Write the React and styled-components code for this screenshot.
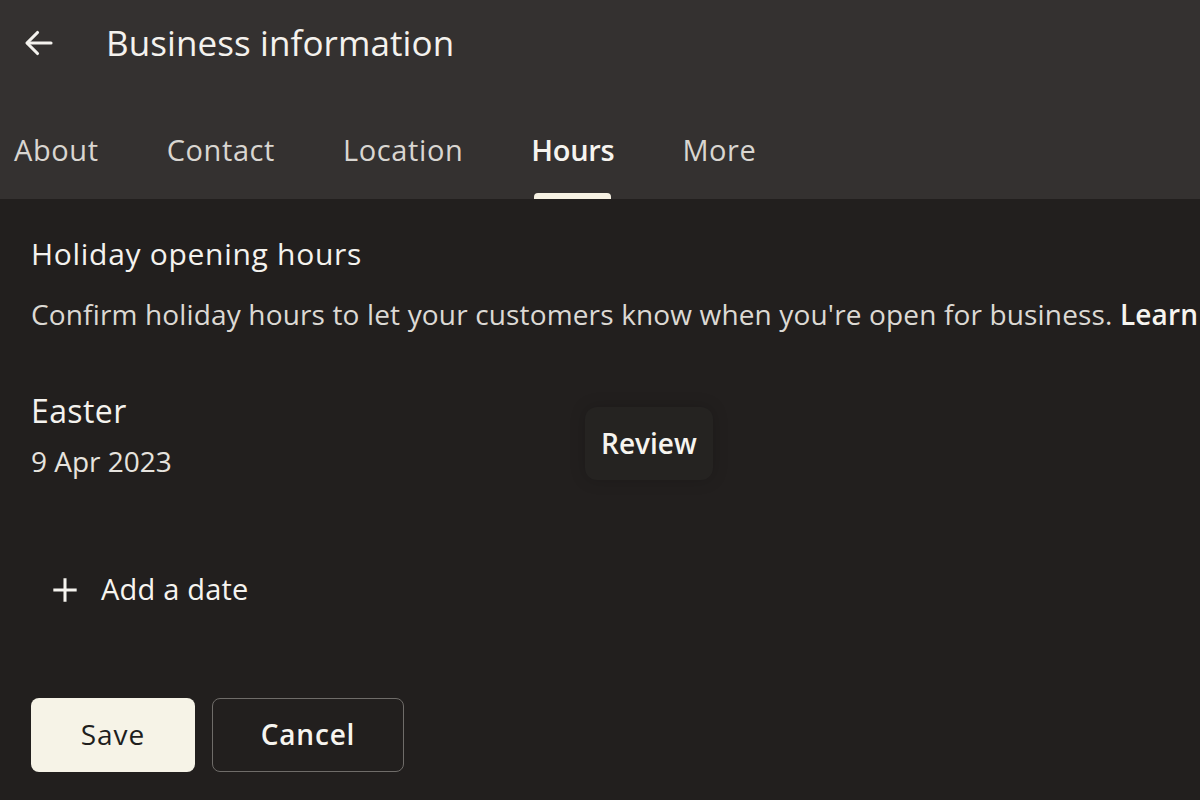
import React from "react";
import styled, { createGlobalStyle } from "styled-components";

const Global = createGlobalStyle`
  html, body { margin: 0; padding: 0; background: #221f1e; }
  body { font-family: "Open Sans", Roboto, sans-serif; color: #f1efea; overflow: hidden; line-height: 1.2; }
  * { box-sizing: border-box; }
  button { font-family: "Open Sans", Roboto, sans-serif; line-height: 1.2; cursor: pointer; }
`;

const Page = styled.div`
  width: 1200px;
  height: 800px;
  display: flex;
  flex-direction: column;
  background: #221f1e;
  overflow: hidden;
`;

const Header = styled.header`
  background: #343130;
  height: 199px;
  display: flex;
  flex-direction: column;
  flex-shrink: 0;
`;

const TopBar = styled.div`
  height: 86px;
  display: flex;
  align-items: center;
  padding-left: 20px;
  gap: 49px;
`;

const BackButton = styled.button`
  width: 37px;
  height: 37px;
  padding: 0;
  border: 0;
  background: none;
  color: #f4f2ee;
  display: flex;
  align-items: center;
  justify-content: center;
`;

const Title = styled.h1`
  margin: 0;
  font-size: 35px;
  font-weight: 400;
  color: #f4f2ee;
  letter-spacing: 0.1px;
`;

const Tabs = styled.nav`
  flex: 1;
  display: flex;
  align-items: stretch;
  padding-left: 14px;
  gap: 68px;
`;

const Tab = styled.div`
  position: relative;
  display: flex;
  align-items: center;
  padding-top: 16px;
  font-size: 29px;
  font-weight: ${(p) => (p.$active ? 600 : 400)};
  letter-spacing: ${(p) => (p.$active ? "-0.3px" : "0.6px")};
  color: ${(p) => (p.$active ? "#f6f4ef" : "#d9d6d1")};
`;

const Indicator = styled.span`
  position: absolute;
  left: 3px;
  right: 3px;
  bottom: 0;
  height: 6px;
  border-radius: 4px 4px 0 0;
  background: #f6f1e3;
`;

const Content = styled.main`
  flex: 1;
  display: flex;
  flex-direction: column;
  padding: 37px 0 0 31px;
`;

const SectionTitle = styled.h2`
  margin: 0;
  font-size: 30px;
  font-weight: 500;
  letter-spacing: 0.7px;
  color: #f4f2ee;
`;

const Description = styled.p`
  margin: 26px 0 0;
  font-size: 28px;
  font-weight: 400;
  letter-spacing: 0.15px;
  color: #dcd9d4;
  white-space: nowrap;
  b { font-weight: 600; color: #f6f4ef; }
`;

const HolidayRow = styled.div`
  margin-top: 60px;
  display: flex;
  align-items: flex-start;
`;

const HolidayInfo = styled.div`
  width: 554px;
  display: flex;
  flex-direction: column;
  gap: 15px;
`;

const HolidayName = styled.div`
  font-size: 32px;
  font-weight: 400;
  letter-spacing: 0.4px;
  color: #f4f2ee;
`;

const HolidayDate = styled.div`
  font-size: 28px;
  color: #e6e3de;
`;

const ReviewButton = styled.button`
  border: 0;
  background: #252321;
  border-radius: 12px;
  box-shadow: 0 0 16px rgba(0, 0, 0, 0.18);
  padding: 20px 16px;
  font-size: 28px;
  font-weight: 600;
  color: #f6f4ef;
  margin-top: 15px;
`;

const AddDate = styled.button`
  margin-top: 92px;
  margin-left: 20px;
  align-self: flex-start;
  border: 0;
  background: none;
  padding: 0;
  display: flex;
  align-items: center;
  gap: 22px;
  font-size: 29px;
  font-weight: 500;
  letter-spacing: 0.2px;
  color: #f6f4ef;
`;

const Actions = styled.div`
  margin-top: 91px;
  display: flex;
  gap: 17px;
`;

const ActionButton = styled.button`
  height: 74px;
  width: ${(p) => p.$w}px;
  border-radius: 8px;
  font-size: 28px;
  font-weight: ${(p) => (p.$primary ? 400 : 600)};
  letter-spacing: ${(p) => (p.$primary ? "1px" : "0.8px")};
  color: ${(p) => (p.$primary ? "#201e1d" : "#f6f4ef")};
  background: ${(p) => (p.$primary ? "#f6f3e7" : "transparent")};
  border: ${(p) => (p.$primary ? "0" : "1.5px solid #6f6c69")};
`;

const tabs = ["About", "Contact", "Location", "Hours", "More"];

export default function App() {
  return (
    <>
      <Global />
      <Page>
        <Header>
          <TopBar>
            <BackButton aria-label="Back">
              <svg width="36" height="36" viewBox="0 0 24 24" fill="none" stroke="currentColor" strokeWidth="2.1" strokeLinecap="round" strokeLinejoin="round">
                <path d="M20 12H4.5" />
                <path d="M11 5l-7 7 7 7" />
              </svg>
            </BackButton>
            <Title>Business information</Title>
          </TopBar>
          <Tabs>
            {tabs.map((t) => (
              <Tab key={t} $active={t === "Hours"}>
                {t}
                {t === "Hours" && <Indicator />}
              </Tab>
            ))}
          </Tabs>
        </Header>
        <Content>
          <SectionTitle>Holiday opening hours</SectionTitle>
          <Description>
            Confirm holiday hours to let your customers know when you're open for business. <b>Learn more</b>
          </Description>
          <HolidayRow>
            <HolidayInfo>
              <HolidayName>Easter</HolidayName>
              <HolidayDate>9 Apr 2023</HolidayDate>
            </HolidayInfo>
            <ReviewButton>Review</ReviewButton>
          </HolidayRow>
          <AddDate>
            <svg width="28" height="28" viewBox="0 0 24 24" fill="none" stroke="currentColor" strokeWidth="2.6">
              <path d="M12 2v20M2 12h20" />
            </svg>
            Add a date
          </AddDate>
          <Actions>
            <ActionButton $primary $w={164}>Save</ActionButton>
            <ActionButton $w={192}>Cancel</ActionButton>
          </Actions>
        </Content>
      </Page>
    </>
  );
}
